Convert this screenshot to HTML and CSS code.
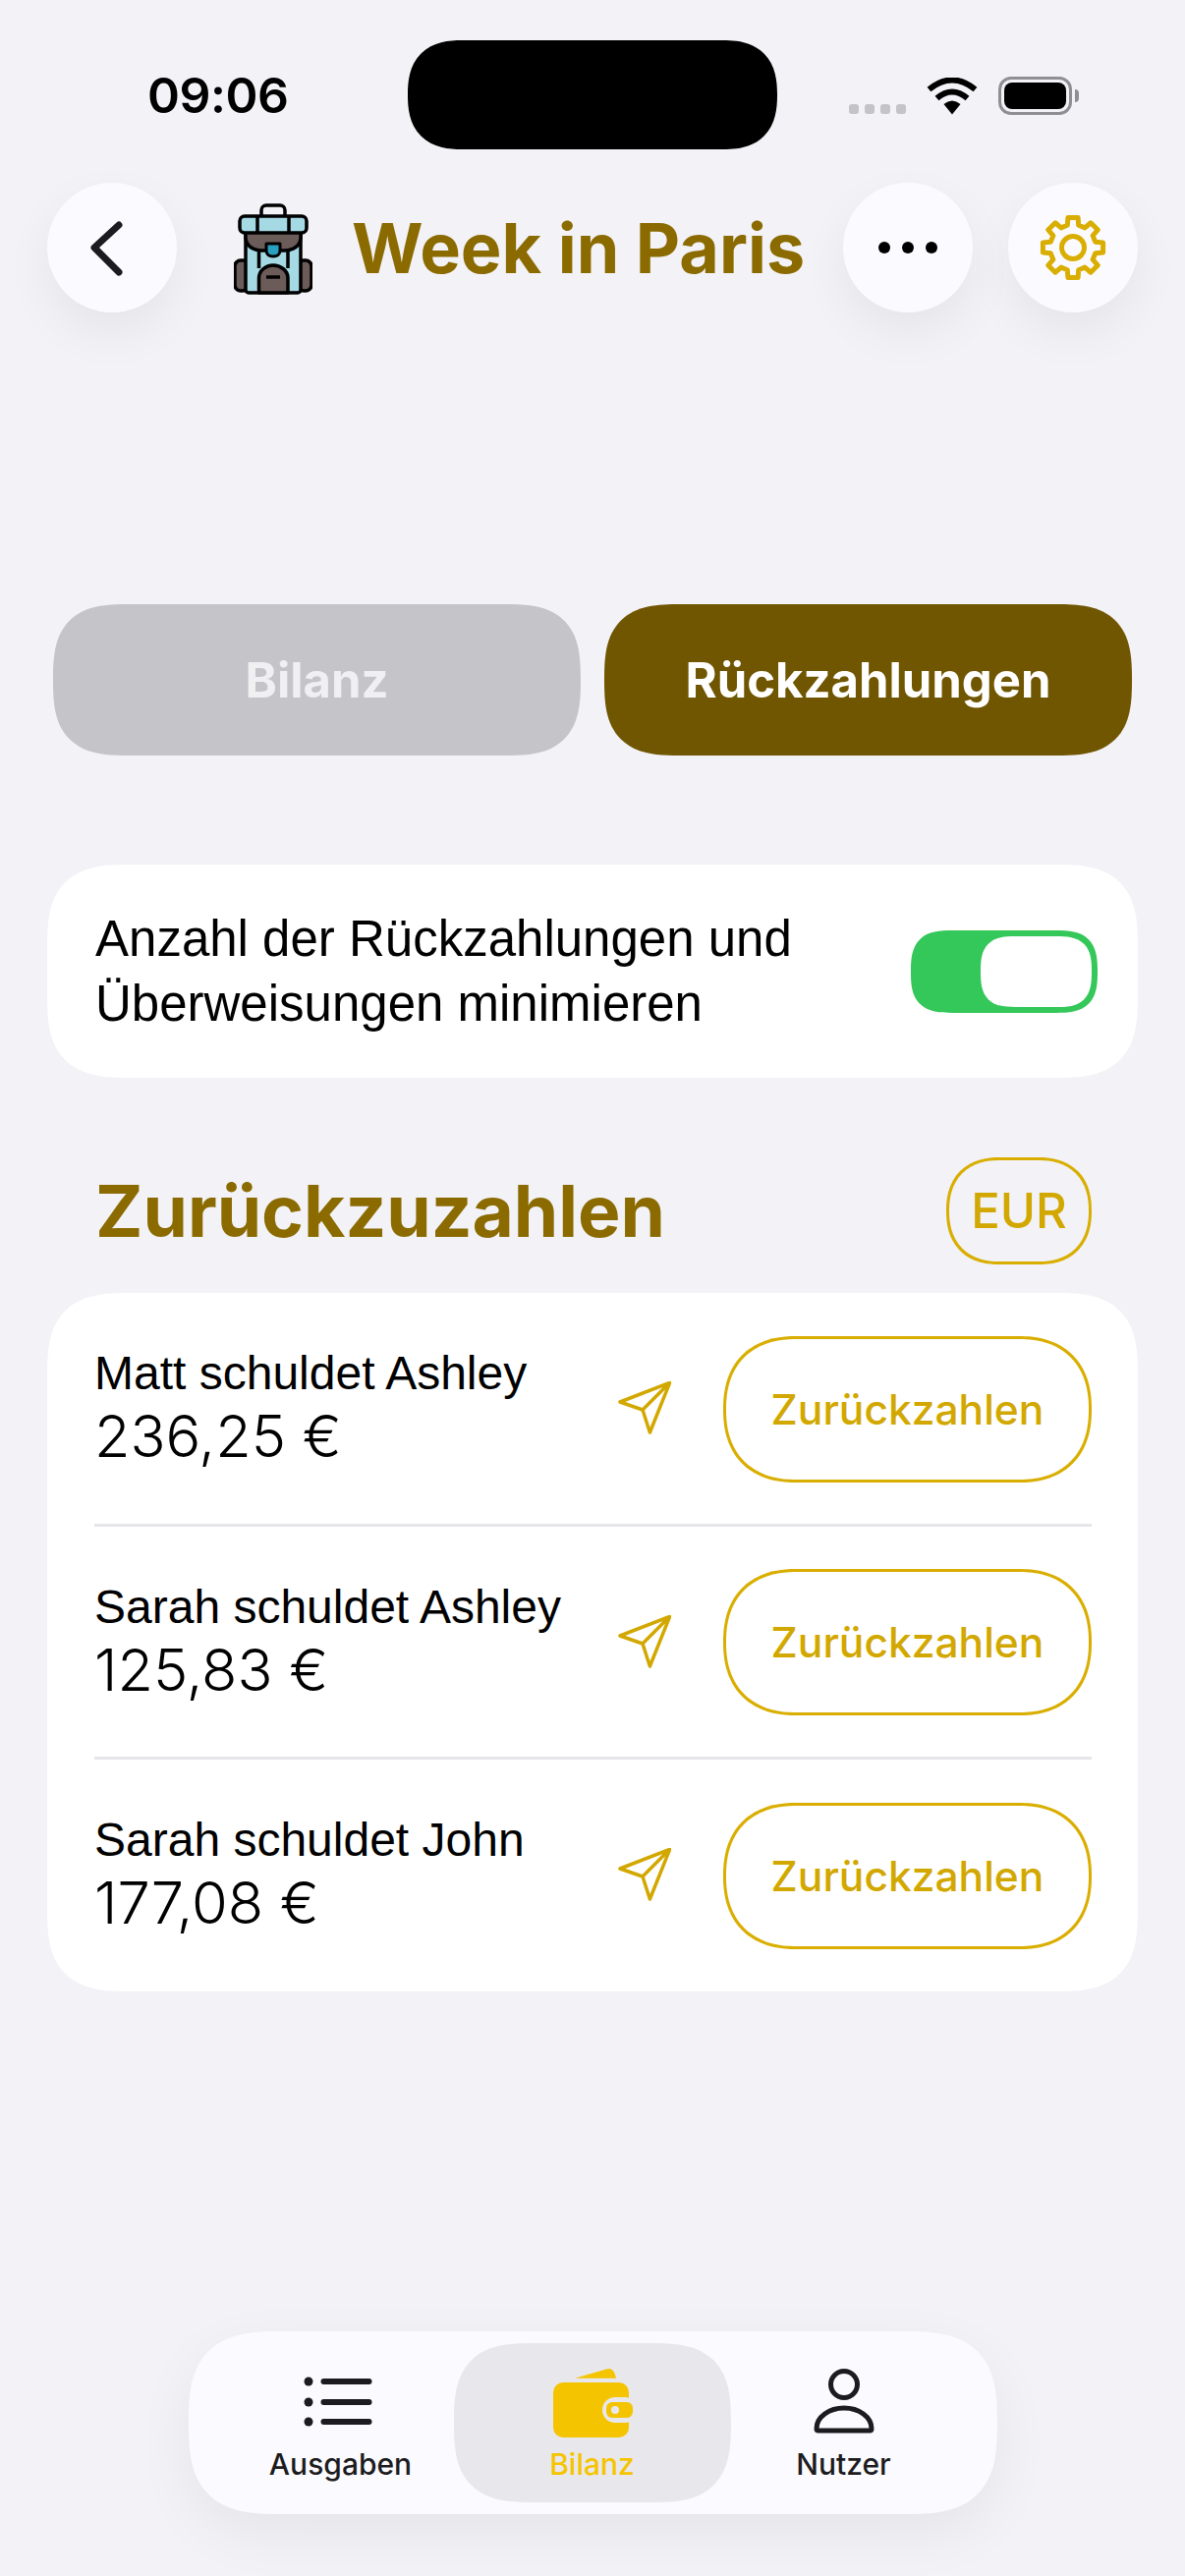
FILE: index.html

```html
<!DOCTYPE html>
<html lang="de">
<head>
  <meta charset="UTF-8" />
  <meta name="viewport" content="width=device-width, initial-scale=1.0"/>
  <title>Week in Paris</title>
  <link rel="stylesheet" href="styles.css">
</head>
<body>
  <div class="status">
    <span class="time">09:06</span>
    <div class="island"></div>
    <div class="signal"><i></i><i></i><i></i><i></i></div>
    <svg class="wifi" viewBox="0 0 52 38" fill="none" stroke="#000" stroke-width="6">
      <path d="M2.5 12 Q26 -7 49.5 12"/>
      <path d="M10.5 21 Q26 8 41.5 21"/>
      <path d="M26 37.5 L17.5 27 Q26 20 34.5 27 Z" fill="#000" stroke="none"/>
    </svg>
    <div class="battery"><div class="battery-fill"></div></div>
    <div class="battery-cap"></div>
  </div>

  <header class="topbar">
    <button class="round-btn">
      <svg class="icon-back" viewBox="0 0 36 60" fill="none" stroke="#1c1c1e" stroke-width="7" stroke-linecap="round" stroke-linejoin="round">
        <path d="M30 7 L5 30 L30 55"/>
      </svg>
    </button>
    <svg class="backpack" viewBox="0 0 80 93" stroke="#000" stroke-width="3.5" stroke-linejoin="round">
      <rect x="28" y="2" width="24" height="14" rx="5" fill="none"/>
      <rect x="1" y="58" width="14" height="31" rx="6" fill="#6b5b59"/>
      <rect x="65" y="58" width="14" height="31" rx="6" fill="#6b5b59"/>
      <rect x="12" y="28" width="56" height="63" rx="3" fill="#a5d9e3"/>
      <path d="M12 29 H68 V35 C68 43 60 48 52 48 H28 C20 48 12 43 12 35 Z" fill="#6b5b59"/>
      <path d="M25.500 48 V66 M55 48 V66" fill="none"/>
      <path d="M25.500 91 V76 C25.500 68 33 63 40 63 C47 63 55 68 55 76 V91 Z" fill="#6b5b59"/>
      <path d="M33 75 H47" fill="none"/>
      <rect x="6" y="13" width="68" height="17" rx="5" fill="#a5d9e3"/>
      <path d="M24 13 V30 M56 13 V30" fill="none"/>
      <path d="M33 41 H47 V48 C47 52 44 54 40 54 C36 54 33 52 33 48 Z" fill="#2aa0c0" stroke-width="3"/>
    </svg>
    <h1 class="trip-title">Week in Paris</h1>
    <button class="round-btn push">
      <svg class="icon-dots" viewBox="0 0 60 12" fill="#000">
        <circle cx="6" cy="6" r="6"/><circle cx="30" cy="6" r="6"/><circle cx="54" cy="6" r="6"/>
      </svg>
    </button>
    <button class="round-btn">
      <svg class="icon-gear" viewBox="0 0 72 72" fill="none" stroke="#d9ae00" stroke-width="5" stroke-linejoin="round">
        <polygon points="30.3,13.2 30.9,5.4 41.1,5.4 41.7,13.2 48.09,15.85 54.03,10.76 61.24,17.97 56.15,23.91 58.8,30.3 66.6,30.9 66.6,41.1 58.8,41.7 56.15,48.09 61.24,54.03 54.03,61.24 48.09,56.15 41.7,58.8 41.1,66.6 30.9,66.6 30.3,58.8 23.91,56.15 17.97,61.24 10.76,54.03 15.85,48.09 13.2,41.7 5.4,41.1 5.4,30.9 13.2,30.3 15.85,23.91 10.76,17.97 17.97,10.76 23.91,15.85"/>
        <circle cx="36" cy="36" r="11.500"/>
      </svg>
    </button>
  </header>

  <div class="segments">
    <button class="segment">Bilanz</button>
    <button class="segment active">Rückzahlungen</button>
  </div>

  <section class="card option">
    <p class="option-text">Anzahl der Rückzahlungen und Überweisungen minimieren</p>
    <div class="toggle"><div class="knob"></div></div>
  </section>

  <div class="section-head">
    <h2>Zurückzuzahlen</h2>
    <span class="currency">EUR</span>
  </div>

  <section class="card debts">
    <div class="debt">
      <div class="debt-info">
        <div class="debt-name">Matt schuldet Ashley</div>
        <div class="debt-amount">236,25 €</div>
      </div>
      <svg class="icon-send" viewBox="0 0 54 54" fill="none" stroke="#d2a800" stroke-width="3.500" stroke-linejoin="round"><path d="M52.700 1.300 L2 21 L25 29 L32.400 52 Z M25 29 L52.700 1.300"/></svg>
      <button class="repay">Zurückzahlen</button>
    </div>
    <div class="debt">
      <div class="debt-info">
        <div class="debt-name">Sarah schuldet Ashley</div>
        <div class="debt-amount">125,83 €</div>
      </div>
      <svg class="icon-send" viewBox="0 0 54 54" fill="none" stroke="#d2a800" stroke-width="3.500" stroke-linejoin="round"><path d="M52.700 1.300 L2 21 L25 29 L32.400 52 Z M25 29 L52.700 1.300"/></svg>
      <button class="repay">Zurückzahlen</button>
    </div>
    <div class="debt">
      <div class="debt-info">
        <div class="debt-name">Sarah schuldet John</div>
        <div class="debt-amount">177,08 €</div>
      </div>
      <svg class="icon-send" viewBox="0 0 54 54" fill="none" stroke="#d2a800" stroke-width="3.500" stroke-linejoin="round"><path d="M52.700 1.300 L2 21 L25 29 L32.400 52 Z M25 29 L52.700 1.300"/></svg>
      <button class="repay">Zurückzahlen</button>
    </div>
  </section>

  <nav class="tabbar">
    <div class="tab">
      <svg class="icon-list" viewBox="0 0 72 54" fill="#1c1c1e" stroke="none">
        <circle cx="6" cy="7" r="4.500"/><circle cx="6" cy="28" r="4.500"/><circle cx="6" cy="48" r="4.500"/>
        <rect x="18.500" y="4" width="52" height="6" rx="3"/><rect x="18.500" y="25" width="52" height="6" rx="3"/><rect x="18.500" y="45" width="52" height="6" rx="3"/>
      </svg>
      <span>Ausgaben</span>
    </div>
    <div class="tab current">
      <svg class="icon-wallet" viewBox="0 0 90 76">
        <path d="M26 12.700 L58 3.500 Q66 1 68 12.700 Z" fill="#f5c400"/>
        <rect x="4" y="17" width="77" height="56" rx="10" fill="#f5c400"/>
        <rect x="54" y="32" width="36" height="26" rx="13" fill="#e8e8ec"/>
        <rect x="58" y="37" width="27" height="16" rx="6" fill="#f5c400"/>
        <circle cx="67" cy="45" r="4" fill="#e8e8ec"/>
      </svg>
      <span>Bilanz</span>
    </div>
    <div class="tab">
      <svg class="icon-person" viewBox="0 0 66 68" fill="none" stroke="#1c1c1e" stroke-width="5" stroke-linejoin="round">
        <circle cx="33" cy="17" r="13.500"/>
        <path d="M33 41 C18 41 5 50 5 62 Q5 64 7 64 H59 Q61 64 61 62 C61 50 48 41 33 41 Z"/>
      </svg>
      <span>Nutzer</span>
    </div>
  </nav>
</body>
</html>
```

FILE: styles.css

```css
body {
  margin: 0;
  height: 2622px;
  overflow: hidden;
  background: #f2f2f7;
  font-family: Inter, "Liberation Sans", sans-serif;
  color: #000;
}
button {
  font-family: inherit;
  border: none;
  padding: 0;
}
h1, h2, p {
  margin: 0;
}

/* status bar */
.status {
  display: flex;
  align-items: center;
  height: 111px;
  padding: 41px 0 0 150px;
}
.time {
  width: 142px;
  font-size: 50px;
  font-weight: 600;
  line-height: 1;
  letter-spacing: -0.5px;
  white-space: nowrap;
}
.island {
  width: 376px;
  height: 111px;
  margin-left: 123px;
  border-radius: 55px;
  corner-shape: superellipse(1.3);
  background: #000;
}
.signal {
  display: flex;
  gap: 6px;
  margin: 29px 0 0 73px;
}
.signal i {
  width: 10px;
  height: 10px;
  border-radius: 3px;
  background: #c4c4c8;
}
.wifi {
  width: 52px;
  height: 38px;
  margin-left: 21px;
  margin-top: 2px;
}
.battery {
  width: 75px;
  height: 39px;
  margin-left: 21px;
  margin-top: 2px;
  padding: 3px 3px;
  box-sizing: border-box;
  border: 3px solid #8e8e93;
  border-radius: 13px;
}
.battery-fill {
  height: 100%;
  background: #000;
  border-radius: 8px;
}
.battery-cap {
  width: 4px;
  height: 13px;
  margin-left: 3px;
  margin-top: 2px;
  border-radius: 0 6px 6px 0;
  background: #8e8e93;
}

/* top bar */
.topbar {
  display: flex;
  align-items: center;
  height: 132px;
  margin: 34px 48px 0;
}
.round-btn {
  display: flex;
  align-items: center;
  justify-content: center;
  flex: none;
  width: 132px;
  height: 132px;
  border-radius: 50%;
  background: #fbfbff;
  box-shadow: 0 20px 50px rgba(0, 0, 0, 0.06);
}
.round-btn.push {
  margin-left: auto;
  margin-right: 36px;
}
.icon-back {
  width: 36px;
  height: 60px;
  margin-right: 10px;
}
.icon-dots {
  width: 60px;
  height: 12px;
}
.icon-gear {
  width: 72px;
  height: 72px;
}
.backpack {
  width: 80px;
  height: 93px;
  margin-left: 58px;
  margin-bottom: -2px;
}
.trip-title {
  margin-left: 40px;
  font-size: 70px;
  font-weight: 700;
  color: #8b6b00;
  white-space: nowrap;
}

/* segments */
.segments {
  display: grid;
  grid-template-columns: 1fr 1fr;
  gap: 24px;
  margin: 297px 54px 0;
}
.segment {
  height: 154px;
  border-radius: 77px;
  corner-shape: superellipse(1.5);
  background: #c5c5c9;
  color: #f0f0f2;
  font-size: 49px;
  font-weight: 700;
}
.segment.active {
  background: #705600;
  color: #fff;
}

.card {
  margin: 0 48px;
  background: #fff;
  border-radius: 84px;
  corner-shape: superellipse(1.5);
}

/* option */
.option {
  display: flex;
  align-items: center;
  justify-content: space-between;
  height: 217px;
  margin-top: 111px;
  padding: 0 41px 0 49px;
}
.option-text {
  width: 760px;
  font-family: "Liberation Sans", sans-serif;
  font-size: 51px;
  line-height: 66px;
}
.toggle {
  display: flex;
  align-items: center;
  justify-content: flex-end;
  width: 190px;
  height: 84px;
  padding-right: 6px;
  box-sizing: border-box;
  border-radius: 42px;
  corner-shape: superellipse(1.5);
  background: #34c759;
}
.knob {
  width: 113px;
  height: 72px;
  border-radius: 36px;
  corner-shape: superellipse(1.5);
  background: #fff;
}

/* heading */
.section-head {
  display: flex;
  align-items: center;
  justify-content: space-between;
  margin: 81px 95px 29px 97px;
}
.section-head h2 {
  font-size: 73px;
  font-weight: 700;
  color: #8b6b00;
}
.currency {
  display: flex;
  align-items: center;
  justify-content: center;
  width: 148px;
  height: 109px;
  box-sizing: border-box;
  border: 3px solid #d9ae00;
  border-radius: 54px;
  corner-shape: superellipse(1.2);
  font-size: 49px;
  font-weight: 450;
  color: #d2a800;
}

/* debts */
.debts {
  padding: 0 47px 0 48px;
  height: 711px;
  box-sizing: border-box;
}
.debt {
  display: flex;
  align-items: center;
  height: 234.5px;
  border-bottom: 3px solid #e5e5ea;
}
.debt:last-child {
  border-bottom: none;
}
.debt-info {
  flex: 1;
  margin-top: -3px;
}
.debt-name {
  font-family: "Liberation Sans", sans-serif;
  font-size: 48px;
  line-height: 60px;
}
.debt-amount {
  font-size: 59.5px;
  font-weight: 300;
  line-height: 67px;
}
.icon-send {
  width: 54px;
  height: 54px;
  margin-right: 53px;
}
.repay {
  width: 375px;
  height: 149px;
  margin-top: 2px;
  box-sizing: border-box;
  border: 3px solid #d9ae00;
  border-radius: 74px;
  corner-shape: superellipse(1.2);
  background: none;
  font-size: 42.5px;
  font-weight: 450;
  color: #d2a800;
}

/* tab bar */
.tabbar {
  display: grid;
  grid-template-columns: repeat(3, 256px);
  align-items: center;
  width: 823px;
  height: 186px;
  box-sizing: border-box;
  margin: 346px auto 0;
  padding: 0 27px;
  border-radius: 93px;
  corner-shape: superellipse(1.5);
  background: #fbfbff;
  box-shadow: 0 20px 60px rgba(0, 0, 0, 0.06);
}
.tab {
  display: flex;
  flex-direction: column;
  align-items: center;
  height: 162px;
  font-size: 30px;
  font-weight: 500;
  line-height: 30px;
  color: #1c1c1e;
}
.icon-list {
  width: 72px;
  height: 54px;
  margin: 32px 6px 22px 0;
}
.icon-wallet {
  width: 90px;
  height: 76px;
  margin: 23px 0 9px 2px;
}
.icon-person {
  width: 66px;
  height: 68px;
  margin: 25px 0 15px;
}
.tab.current {
  margin: 0 -13px;
  border-radius: 81px;
  corner-shape: superellipse(1.5);
  background: #e8e8ec;
  color: #f5c400;
}
```
